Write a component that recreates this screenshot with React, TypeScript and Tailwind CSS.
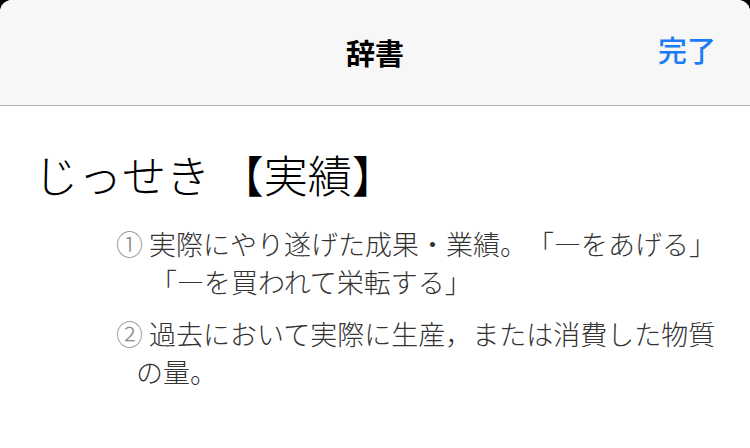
export default function App() {
  const jp = { fontFamily: '"Noto Sans CJK JP", "Noto Sans", sans-serif' }

  return (
    <div className="h-[448px] w-[750px] overflow-hidden bg-black" style={jp}>
      <div className="flex h-full flex-col overflow-hidden rounded-t-[12px] bg-white">
        <div className="relative flex h-[106px] shrink-0 items-center justify-center border-b border-[#b4b4b4] bg-[#f7f7f7]">
          <h1 className="text-[29px] font-bold leading-none text-black">辞書</h1>
          <button className="absolute right-[34px] top-[35px] text-[29px] font-medium leading-none text-[#1b7cf3]">
            完了
          </button>
        </div>

        <div className="px-[34px] pt-[40px] [text-spacing-trim:space-all]">
          <h2 className="text-[44px] font-light leading-[56px] text-black">
            じっせき 【実績】
          </h2>

          <div className="mt-[23px] ml-[82px] w-[610px] text-[27px] font-light leading-[38px] text-[#333]">
            <p className="pl-[34px] -indent-[34px]">
              <span className="text-[#8a8a8a]">①</span> 実際にやり遂げた成果・業績。「―をあげる」
              <br />
              「―を買われて栄転する」
            </p>
            <p className="mt-[14px] pl-[20px] -indent-[20px]">
              <span className="text-[#8a8a8a]">②</span> 過去において実際に生産，または消費した物質の量。
            </p>
          </div>
        </div>
      </div>
    </div>
  )
}
